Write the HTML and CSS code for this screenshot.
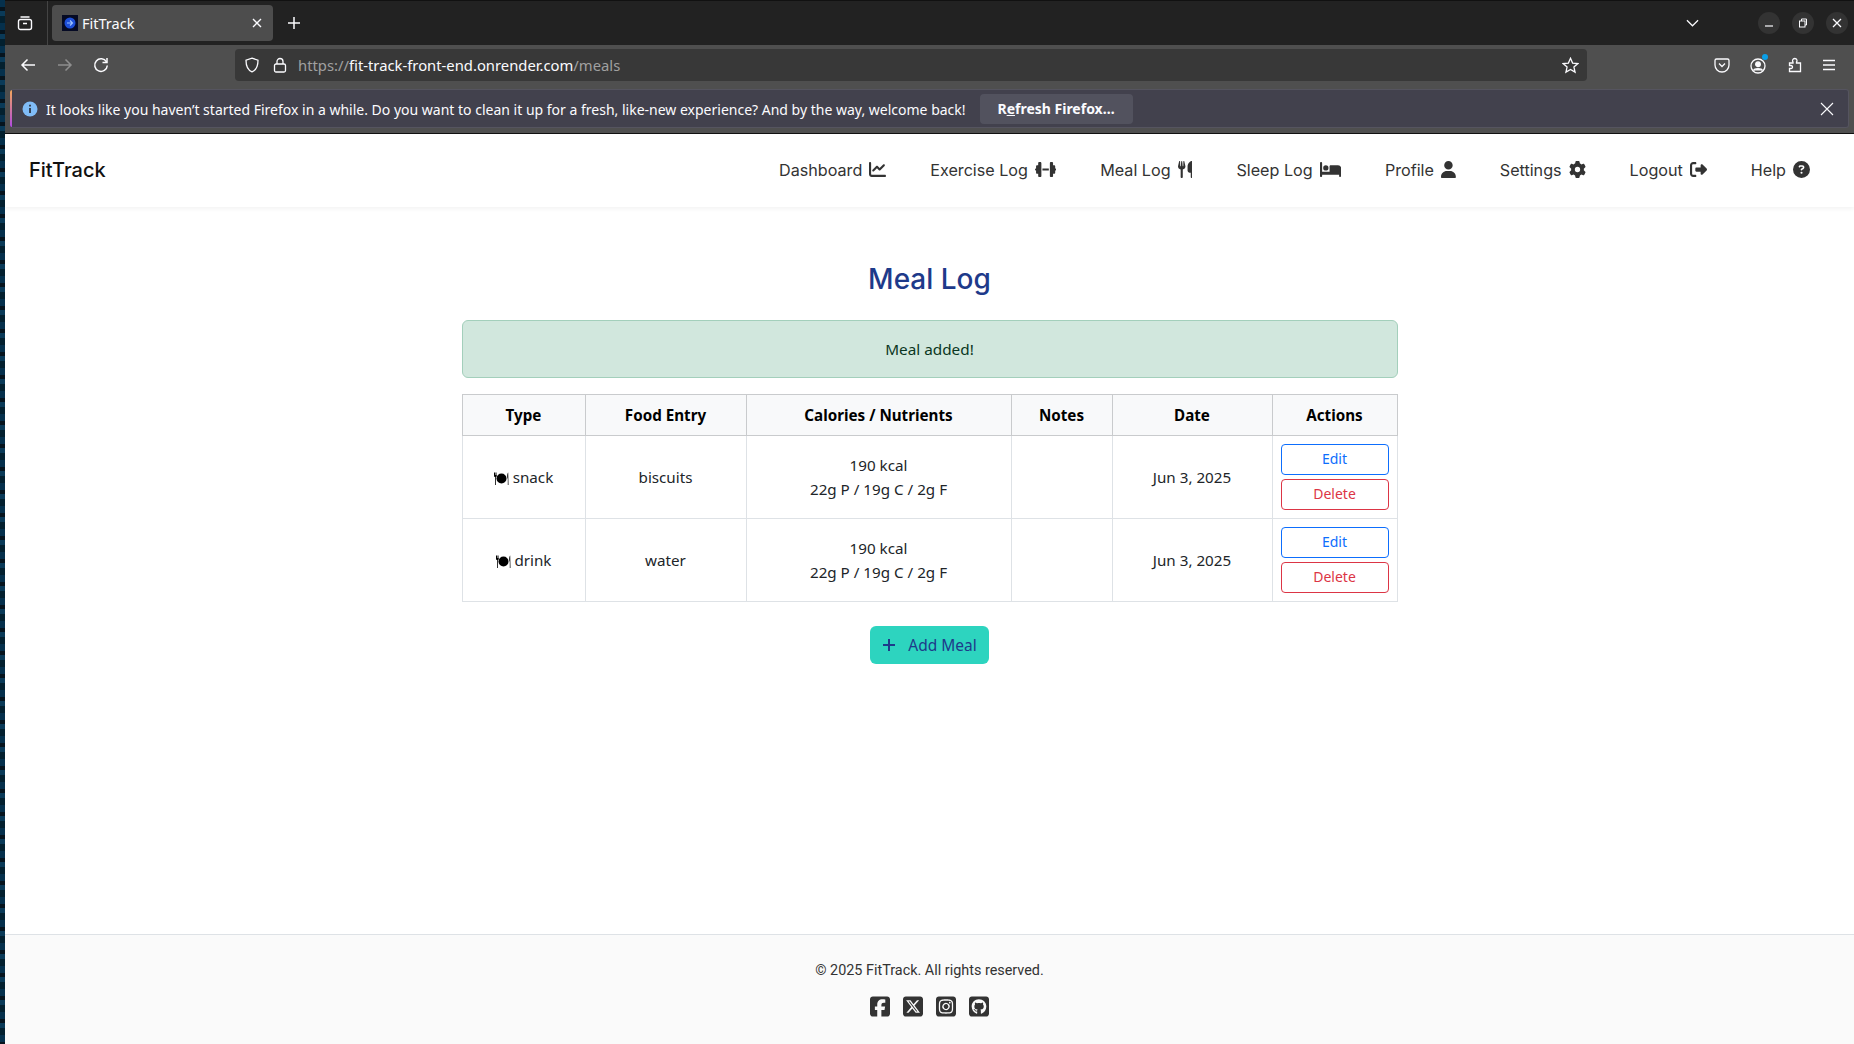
FILE: index.html
```html
<!DOCTYPE html>
<html lang="en">

<head>
    <meta charset="UTF-8">
    <meta name="viewport" content="width=device-width, initial-scale=1.0">
    <title>FitTrack</title>
    <link rel="stylesheet" href="styles.css">
</head>

<body>
    <div class="wallpaper"></div>
    <div class="window">
        <!-- browser tabs -->
        <div class="tabbar">
            <svg class="tabs-icon" viewBox="0 0 16 16" width="16" height="16" fill="none" stroke="#fbfbfe" stroke-width="1.4"><rect x="1.5" y="4.5" width="13" height="10" rx="2"/><path d="M3.5 2h9M6 8.5h4"/></svg>
            <div class="tab-divider"></div>
            <div class="tab">
                <svg class="favicon" viewBox="0 0 16 16" width="16" height="16"><rect width="16" height="16" fill="#050a24"/><circle cx="8" cy="8" r="5.5" fill="#1d4fd8"/><path d="M5 8h5M8 5.5l2.5 2.5L8 10.500" stroke="#9cc0ff" stroke-width="1.200" fill="none"/></svg>
                <span class="tab-title">FitTrack</span>
                <svg class="tab-close" viewBox="0 0 12 12" width="12" height="12" stroke="#fbfbfe" stroke-width="1.400"><path d="M2 2l8 8M10 2l-8 8"/></svg>
            </div>
            <svg class="new-tab" viewBox="0 0 14 14" width="14" height="14" stroke="#fbfbfe" stroke-width="1.500"><path d="M7 1v12M1 7h12"/></svg>
            <svg class="tab-list" viewBox="0 0 14 8" width="13" height="8" fill="none" stroke="#fbfbfe" stroke-width="1.300"><path d="M1 1l6 6 6-6"/></svg>
            <div class="win-btn"><svg viewBox="0 0 10 10" width="10" height="10" stroke="#fbfbfe" stroke-width="1.200"><path d="M1 8h8"/></svg></div>
            <div class="win-btn"><svg viewBox="0 0 10 10" width="10" height="10" fill="none" stroke="#fbfbfe" stroke-width="1"><rect x="1.500" y="3" width="5.500" height="6"/><path d="M3.500 3V1h5v6H7"/></svg></div>
            <div class="win-btn"><svg viewBox="0 0 10 10" width="10" height="10" stroke="#fbfbfe" stroke-width="1.300"><path d="M1 1l8 8M9 1l-8 8"/></svg></div>
        </div>

        <!-- address bar -->
        <div class="toolbar">
            <svg class="tool back" viewBox="0 0 16 16" width="16" height="16" fill="none" stroke="#fbfbfe" stroke-width="1.500"><path d="M15 8H2M7.500 2.500L2 8l5.500 5.500"/></svg>
            <svg class="tool forward" viewBox="0 0 16 16" width="16" height="16" fill="none" stroke="#8f8f8f" stroke-width="1.500"><path d="M1 8h13M8.500 2.500L14 8l-5.500 5.500"/></svg>
            <svg class="tool reload" viewBox="0 0 16 16" width="16" height="16" fill="none" stroke="#fbfbfe" stroke-width="1.500"><path d="M13.500 5A6.300 6.300 0 1 0 14.300 8.500"/><path d="M14 1v4.500H9.500" /></svg>
            <div class="urlbar">
                <svg class="shield" viewBox="0 0 16 16" width="16" height="16" fill="none" stroke="#fbfbfe" stroke-width="1.300"><path d="M8 1.200l6 2c0 6-1.500 9.800-6 11.600C3.500 13 2 9.200 2 3.200z"/></svg>
                <svg class="lock" viewBox="0 0 16 16" width="16" height="16" fill="none" stroke="#fbfbfe" stroke-width="1.300"><rect x="2.500" y="7" width="11" height="8" rx="1.500"/><path d="M5 7V4.500a3 3 0 0 1 6 0V7"/></svg>
                <div class="url"><span class="url-dim">https://</span>fit-track-front-end.onrender.com<span class="url-dim">/meals</span></div>
                <svg class="star" viewBox="0 0 16 16" width="17" height="17" fill="none" stroke="#fbfbfe" stroke-width="1.200"><path d="M8 1.200l2 4.500 4.900.5-3.700 3.200 1.100 4.800L8 11.700l-4.300 2.500 1.100-4.800L1.100 6.200 6 5.700z"/></svg>
            </div>
            <svg class="tool pocket" viewBox="0 0 16 16" width="16" height="16" fill="none" stroke="#fbfbfe" stroke-width="1.300"><path d="M2.500 2h11A1.500 1.500 0 0 1 15 3.500V8A7 7 0 0 1 1 8V3.500A1.500 1.500 0 0 1 2.500 2z"/><path d="M5 6.500l3 3 3-3"/></svg>
            <div class="account">
                <svg viewBox="0 0 16 16" width="16" height="16" fill="none" stroke="#fbfbfe" stroke-width="1.300"><circle cx="8" cy="8" r="7"/><circle cx="8" cy="6.200" r="2.300" fill="#fbfbfe"/><path d="M3.500 12.500c1-2.500 8-2.500 9 0" fill="#fbfbfe"/></svg>
                <span class="account-dot"></span>
            </div>
            <svg class="tool extensions" viewBox="0 0 16 16" width="16" height="16" fill="none" stroke="#fbfbfe" stroke-width="1.300"><path d="M2.500 14.500V11.500h1.500c1 0 1.500-.7 1.500-1.500S5 8.500 4 8.500H2.500V6H6V5c-1-1-.5-3.500 1.800-3.500S10.500 4 9.500 5v1h4v8.500z"/></svg>
            <svg class="tool menu" viewBox="0 0 16 16" width="16" height="16" stroke="#fbfbfe" stroke-width="1.400"><path d="M2 3.500h12M2 8h12M2 12.500h12"/></svg>
        </div>

        <!-- notification bar -->
        <div class="infobar-wrap">
            <div class="infobar">
                <svg class="info-icon" viewBox="0 0 16 16" width="16" height="16"><circle cx="8" cy="8" r="7.500" fill="#80bcf7"/><path d="M8 7v5M8 3.800v1.600" stroke="#1c1b22" stroke-width="1.500"/></svg>
                <span class="info-text">It looks like you haven’t started Firefox in a while. Do you want to clean it up for a fresh, like-new experience? And by the way, welcome back!</span>
                <button class="refresh-btn">R<u>e</u>fresh Firefox…</button>
                <svg class="info-close" viewBox="0 0 14 14" width="14" height="14" stroke="#fbfbfe" stroke-width="1.100"><path d="M1 1l12 12M13 1L1 13"/></svg>
            </div>
        </div>

        <!-- the page itself -->
        <div class="page">
            <nav class="navbar">
                <a class="brand">FitTrack</a>
                <div class="nav-links">
                    <a class="nav-link">Dashboard <svg class="nav-icon" viewBox="0 0 512 512"><path d="M64 64c0-17.7-14.3-32-32-32S0 46.300 0 64V400c0 44.200 35.800 80 80 80H480c17.700 0 32-14.300 32-32s-14.300-32-32-32H80c-8.800 0-16-7.200-16-16V64zm406.600 86.600c12.500-12.500 12.500-32.800 0-45.300s-32.800-12.500-45.300 0L320 210.700l-57.400-57.400c-12.500-12.500-32.800-12.500-45.300 0l-112 112c-12.500 12.500-12.500 32.800 0 45.300s32.800 12.500 45.300 0L240 221.300l57.400 57.400c12.500 12.500 32.800 12.500 45.300 0l128-128z"/></svg></a>
                    <a class="nav-link">Exercise Log <svg class="nav-icon" viewBox="0 0 640 512"><path d="M96 64c0-17.700 14.300-32 32-32h32c17.700 0 32 14.300 32 32V224v64V448c0 17.700-14.300 32-32 32H128c-17.700 0-32-14.300-32-32V384H64c-17.700 0-32-14.300-32-32V288c-17.700 0-32-14.300-32-32s14.300-32 32-32V160c0-17.700 14.300-32 32-32H96V64zm448 0v64h32c17.700 0 32 14.300 32 32v64c17.700 0 32 14.300 32 32s-14.300 32-32 32v64c0 17.700-14.300 32-32 32H544v64c0 17.700-14.300 32-32 32H480c-17.700 0-32-14.300-32-32V288 224 64c0-17.700 14.300-32 32-32h32c17.700 0 32 14.300 32 32zM416 224v64H224V224H416z"/></svg></a>
                    <a class="nav-link">Meal Log <svg class="nav-icon" viewBox="0 0 448 512"><path d="M416 0C400 0 288 32 288 176V288c0 35.300 28.700 64 64 64h32V480c0 17.700 14.300 32 32 32s32-14.300 32-32V352 240 32c0-17.700-14.300-32-32-32zM64 16C64 7.800 57.900 1 49.700 .1S34.200 4.600 32.400 12.500L2.100 148.800C.7 155.100 0 161.500 0 167.900c0 45.900 35.100 83.600 80 87.700V480c0 17.700 14.300 32 32 32s32-14.300 32-32V255.600c44.900-4.100 80-41.800 80-87.700c0-6.400-.7-12.800-2.100-19.100L191.600 12.500c-1.800-8-9.300-13.300-17.400-12.400S160 7.800 160 16V150.200c0 5.400-4.400 9.800-9.800 9.800c-5.100 0-9.300-3.900-9.800-9L127.900 14.600C127.200 6.300 120.300 0 112 0s-15.200 6.300-15.900 14.600L83.700 151c-.5 5.100-4.700 9-9.800 9c-5.400 0-9.800-4.400-9.800-9.800V16z"/></svg></a>
                    <a class="nav-link">Sleep Log <svg class="nav-icon" viewBox="0 0 640 512"><path d="M32 32c17.700 0 32 14.300 32 32V320H288V160c0-17.700 14.300-32 32-32H544c53 0 96 43 96 96V448c0 17.700-14.300 32-32 32s-32-14.300-32-32V416H352 320 64v32c0 17.700-14.300 32-32 32s-32-14.300-32-32V64C0 46.300 14.300 32 32 32zm144 96a80 80 0 1 1 0 160 80 80 0 1 1 0-160z"/></svg></a>
                    <a class="nav-link">Profile <svg class="nav-icon" viewBox="0 0 448 512"><path d="M224 256A128 128 0 1 0 224 0a128 128 0 1 0 0 256zm-45.700 48C79.800 304 0 383.800 0 482.300C0 498.700 13.300 512 29.700 512H418.300c16.400 0 29.700-13.300 29.700-29.700C448 383.800 368.200 304 269.700 304H178.300z"/></svg></a>
                    <a class="nav-link">Settings <svg class="nav-icon" viewBox="0 0 512 512"><path d="M495.900 166.600c3.200 8.700 .5 18.400-6.400 24.600l-43.300 39.400c1.100 8.300 1.700 16.800 1.700 25.400s-.6 17.100-1.700 25.400l43.300 39.400c6.900 6.200 9.600 15.900 6.400 24.600c-4.400 11.900-9.700 23.300-15.800 34.300l-4.700 8.100c-6.600 11-14 21.400-22.100 31.200c-5.900 7.200-15.700 9.600-24.500 6.800l-55.700-17.700c-13.400 10.300-28.200 18.900-44 25.400l-12.500 57.100c-2 9.100-9 16.300-18.200 17.800c-13.800 2.300-28 3.500-42.500 3.500s-28.700-1.200-42.500-3.500c-9.200-1.500-16.200-8.700-18.200-17.800l-12.500-57.100c-15.800-6.500-30.600-15.100-44-25.400L83.100 425.900c-8.800 2.800-18.600 .3-24.500-6.800c-8.100-9.800-15.500-20.200-22.100-31.200l-4.700-8.100c-6.100-11-11.400-22.400-15.800-34.300c-3.200-8.700-.5-18.400 6.400-24.600l43.300-39.400C64.600 273.100 64 264.600 64 256s.6-17.100 1.700-25.400L22.400 191.200c-6.900-6.200-9.600-15.900-6.400-24.600c4.400-11.900 9.700-23.300 15.800-34.300l4.700-8.100c6.600-11 14-21.400 22.100-31.200c5.900-7.200 15.700-9.600 24.500-6.800l55.700 17.700c13.400-10.300 28.200-18.900 44-25.400l12.500-57.100c2-9.100 9-16.300 18.200-17.800C227.300 1.200 241.500 0 256 0s28.700 1.200 42.500 3.500c9.200 1.500 16.200 8.700 18.200 17.800l12.500 57.100c15.800 6.500 30.600 15.100 44 25.400l55.700-17.700c8.800-2.800 18.600-.3 24.500 6.800c8.100 9.800 15.500 20.200 22.100 31.200l4.700 8.100c6.100 11 11.400 22.400 15.800 34.300zM256 336a80 80 0 1 0 0-160 80 80 0 1 0 0 160z"/></svg></a>
                    <a class="nav-link">Logout <svg class="nav-icon" viewBox="0 0 512 512"><path d="M377.900 105.900L500.700 228.700c7.200 7.200 11.300 17.100 11.300 27.300s-4.100 20.100-11.300 27.300L377.900 406.100c-6.400 6.400-15 9.900-24 9.900c-18.700 0-33.900-15.200-33.900-33.900l0-62.100-128 0c-17.700 0-32-14.300-32-32l0-64c0-17.700 14.300-32 32-32l128 0 0-62.100c0-18.700 15.200-33.900 33.900-33.900c9 0 17.600 3.600 24 9.900zM160 96L96 96c-17.700 0-32 14.300-32 32l0 256c0 17.700 14.300 32 32 32l64 0c17.700 0 32 14.300 32 32s-14.300 32-32 32l-64 0c-53 0-96-43-96-96L0 128C0 75 43 32 96 32l64 0c17.700 0 32 14.300 32 32s-14.300 32-32 32z"/></svg></a>
                    <a class="nav-link">Help <svg class="nav-icon" viewBox="0 0 512 512"><path d="M256 512A256 256 0 1 0 256 0a256 256 0 1 0 0 512zM169.800 165.300c7.900-22.300 29.100-37.300 52.800-37.300h58.300c34.900 0 63.100 28.300 63.100 63.100c0 22.600-12.100 43.500-31.700 54.800L280 264.400c-.2 13-10.900 23.600-24 23.600c-13.300 0-24-10.700-24-24V250.500c0-8.600 4.600-16.500 12.100-20.800l44.300-25.400c4.700-2.700 7.600-7.700 7.600-13.100c0-8.400-6.800-15.100-15.100-15.100H222.600c-3.400 0-6.400 2.100-7.500 5.300l-.4 1.200c-4.400 12.500-18.200 19-30.600 14.600s-19-18.200-14.600-30.600l.4-1.200zM224 352a32 32 0 1 1 64 0 32 32 0 1 1 -64 0z"/></svg></a>
                </div>
            </nav>

            <main class="content">
                <h1 class="page-title">Meal Log</h1>
                <div class="alert">Meal added!</div>
                <table class="meal-table">
                    <colgroup>
                        <col class="col-type"><col class="col-food"><col class="col-cal"><col class="col-notes"><col class="col-date"><col class="col-actions">
                    </colgroup>
                    <thead>
                        <tr><th>Type</th><th>Food Entry</th><th>Calories / Nutrients</th><th>Notes</th><th>Date</th><th>Actions</th></tr>
                    </thead>
                    <tbody>
                        <tr>
                            <td class="meal-type"><svg class="plate" viewBox="0 0 15 13" width="15" height="13"><circle cx="7.500" cy="6.500" r="5"/><path d="M0 0.500v3c0 1 .6 1.500 1 1.500v8h.8V5c.4 0 1-.5 1-1.500v-3h-.5v2.500h-.4V.500h-.5v2.500h-.4V.500zM14.200 0.500c-.7.500-1 2-1 4 0 1 .3 2 .6 2.300V13h.7z" /></svg> snack</td>
                            <td>biscuits</td>
                            <td>190 kcal<br>22g P / 19g C / 2g F</td>
                            <td></td>
                            <td>Jun 3, 2025</td>
                            <td class="actions"><button class="btn-edit">Edit</button><button class="btn-delete">Delete</button></td>
                        </tr>
                        <tr>
                            <td class="meal-type"><svg class="plate" viewBox="0 0 15 13" width="15" height="13"><circle cx="7.500" cy="6.500" r="5"/><path d="M0 0.500v3c0 1 .6 1.500 1 1.500v8h.8V5c.4 0 1-.5 1-1.500v-3h-.5v2.500h-.4V.500h-.5v2.500h-.4V.500zM14.200 0.500c-.7.500-1 2-1 4 0 1 .3 2 .6 2.300V13h.7z" /></svg> drink</td>
                            <td>water</td>
                            <td>190 kcal<br>22g P / 19g C / 2g F</td>
                            <td></td>
                            <td>Jun 3, 2025</td>
                            <td class="actions"><button class="btn-edit">Edit</button><button class="btn-delete">Delete</button></td>
                        </tr>
                    </tbody>
                </table>
                <button class="add-btn"><svg class="plus" viewBox="0 0 14 14" width="14" height="14" stroke="#1e3a8a" stroke-width="2"><path d="M7 1v12M1 7h12"/></svg>Add Meal</button>
            </main>

            <footer class="footer">
                <p class="copyright">© 2025 FitTrack. All rights reserved.</p>
                <div class="socials">
                    <svg class="social" viewBox="0 0 448 512"><path d="M64 32C28.700 32 0 60.700 0 96V416c0 35.300 28.700 64 64 64h98.200V334.200H109.400V256h52.800V222.300c0-87.100 39.400-127.500 125-127.500c16.200 0 44.200 3.200 55.700 6.400V172c-6-.6-16.500-1-29.600-1c-42 0-58.200 15.900-58.200 57.200V256h83.600l-14.400 78.200H255V480H384c35.300 0 64-28.700 64-64V96c0-35.300-28.700-64-64-64H64z"/></svg>
                    <svg class="social" viewBox="0 0 448 512"><path d="M64 32C28.700 32 0 60.700 0 96V416c0 35.300 28.700 64 64 64H384c35.300 0 64-28.700 64-64V96c0-35.300-28.700-64-64-64H64zm297.100 84L257.300 234.600 379.400 396H283.800L209 298.100 123.300 396H75.800l111-126.900L69.700 116h98l67.700 89.500L313.600 116h47.500zM323.300 367.600L153.400 142.400H125.100L296.900 367.600h26.300z"/></svg>
                    <svg class="social" viewBox="0 0 448 512"><path d="M194.400 211.700a53.300 53.300 0 1 0 59.300 88.700 53.300 53.300 0 1 0 -59.300-88.700zm142.300-68.400c-5.200-5.200-11.500-9.300-18.400-12c-18.100-7.100-57.600-6.800-83.100-6.500c-4.100 0-7.900 .1-11.200 .1c-3.300 0-7.200 0-11.400-.1c-25.500-.3-64.800-.7-82.900 6.500c-6.900 2.700-13.100 6.800-18.400 12s-9.300 11.500-12 18.400c-7.100 18.100-6.700 57.700-6.500 83.200c0 4.100 .1 7.900 .1 11.100s0 7-.1 11.100c-.2 25.500-.6 65.100 6.500 83.200c2.700 6.900 6.800 13.100 12 18.400s11.500 9.300 18.400 12c18.100 7.100 57.600 6.800 83.100 6.500c4.100 0 7.900-.1 11.200-.1c3.300 0 7.200 0 11.400 .1c25.500 .3 64.800 .7 82.900-6.500c6.900-2.700 13.100-6.800 18.400-12s9.300-11.500 12-18.400c7.200-18 6.800-57.400 6.500-83c0-4.200-.1-8.100-.1-11.400s0-7.100 .1-11.400c.3-25.500 .7-64.900-6.500-83l0 0c-2.700-6.900-6.800-13.100-12-18.400zm-67.100 44.500A82 82 0 1 1 178.400 324.200a82 82 0 1 1 91.100-136.400zm29.200-1.300c-3.100-2.100-5.600-5.100-7.100-8.600s-1.800-7.300-1.100-11.100s2.600-7.100 5.200-9.800s6.100-4.500 9.800-5.200s7.600-.4 11.100 1.100s6.500 3.900 8.600 7s3.200 6.800 3.200 10.600c0 2.500-.5 5-1.400 7.300s-2.400 4.400-4.100 6.200s-3.900 3.200-6.200 4.200s-4.800 1.500-7.300 1.500l0 0c-3.800 0-7.500-1.100-10.600-3.200zM448 96c0-35.300-28.700-64-64-64H64C28.700 32 0 60.700 0 96V416c0 35.300 28.700 64 64 64H384c35.300 0 64-28.700 64-64V96zM357 389c-18.700 18.700-41.400 24.600-67 25.900c-26.400 1.500-105.600 1.500-132 0c-25.600-1.300-48.300-7.200-67-25.900s-24.600-41.400-25.800-67c-1.500-26.400-1.500-105.600 0-132c1.300-25.600 7.100-48.300 25.800-67s41.500-24.600 67-25.800c26.400-1.500 105.600-1.500 132 0c25.600 1.300 48.300 7.100 67 25.800s24.600 41.400 25.800 67c1.500 26.300 1.500 105.400 0 131.900c-1.300 25.600-7.100 48.300-25.800 67z"/></svg>
                    <svg class="social" viewBox="0 0 448 512"><path d="M448 96c0-35.300-28.700-64-64-64H64C28.700 32 0 60.700 0 96V416c0 35.300 28.700 64 64 64H384c35.300 0 64-28.700 64-64V96zM265.800 407.700c0-1.800 0-6 .1-11.600c.1-11.400 .1-28.800 .1-43.700c0-15.600-5.200-25.500-11.300-30.700c37-4.100 76-9.200 76-73.100c0-18.200-6.500-27.300-17.100-39c1.700-4.300 7.400-22-1.700-45c-13.900-4.300-45.700 17.900-45.700 17.900c-13.200-3.700-27.500-5.600-41.600-5.600s-28.400 1.900-41.600 5.600c0 0-31.800-22.200-45.700-17.900c-9.100 22.900-3.500 40.600-1.700 45c-10.600 11.700-15.600 20.800-15.600 39c0 63.600 37.300 69 74.300 73.100c-4.800 4.300-9.100 11.700-10.600 22.300c-9.500 4.300-33.800 11.700-48.300-13.900c-9.100-15.800-25.500-17.100-25.500-17.100c-16.200-.2-1.100 10.200-1.100 10.200c10.800 5 18.400 24.200 18.400 24.200c9.700 29.700 56.100 19.700 56.100 19.700c0 9 .1 21.700 .1 30.600c0 4.800 .1 8.600 .1 10c0 4.300-3 9.500-11.500 8C106 393.600 59.800 330.800 59.800 257.400c0-91.800 70.200-161.500 162-161.500s166.200 69.700 166.200 161.500c.1 73.400-44.700 136.300-110.700 158.300c-8.400 1.500-11.500-3.700-11.500-8z"/></svg>
                </div>
            </footer>
        </div>
    </div>
</body>

</html>
```

FILE: styles.css
```css
* {
    box-sizing: border-box;
}

body {
    margin: 0;
    height: 100vh;
    display: flex;
    overflow: hidden;
    background-color: #fff;
    font-family: "Noto Sans", sans-serif;
}

/* desktop showing at the left of the window */
.wallpaper {
    width: 5px;
    background: repeating-linear-gradient(180deg, #05304c 0, #05304c 7px, #06141e 7px, #06141e 11px, #0a3a58 11px, #0a3a58 16px, #03202f 16px, #03202f 23px);
}

.window {
    flex: 1;
    min-width: 0;
    display: flex;
    flex-direction: column;
}

/* browser chrome */
.tabbar {
    height: 45px;
    padding-right: 6px;
    display: flex;
    align-items: center;
    background-color: #222222;
    border-top: 1px solid #111;
}

.tabs-icon {
    margin-left: 12px;
}

.tab-divider {
    width: 1px;
    height: 44px;
    margin-left: 14px;
    background-color: #444;
}

.tab {
    width: 221px;
    height: 36px;
    margin-left: 4px;
    padding: 0 10px;
    display: flex;
    align-items: center;
    background-color: #4d4d4d;
    border-radius: 4px;
}

.tab-title {
    flex: 1;
    margin-left: 4px;
    color: #fbfbfe;
    font-size: 14.500px;
}

.new-tab {
    margin-left: 14px;
}

.tab-list {
    margin-left: auto;
    margin-right: 47px;
}

.win-btn {
    width: 22px;
    height: 22px;
    margin-left: 12px;
    display: flex;
    justify-content: center;
    align-items: center;
    border-radius: 50%;
    background-color: #333;
}

.toolbar {
    height: 44px;
    padding-bottom: 4px;
    display: flex;
    align-items: center;
    background-color: #4f4f4f;
}

.tool {
    flex: none;
}

.back {
    margin-left: 15px;
}

.forward {
    margin-left: 21px;
}

.reload {
    margin-left: 20px;
}

.urlbar {
    width: 1352px;
    height: 32px;
    margin-left: 126px;
    padding: 0 8px 0 9px;
    display: flex;
    align-items: center;
    background-color: #383838;
    border-radius: 4px;
}

.lock {
    margin-left: 12px;
}

.url {
    flex: 1;
    margin-left: 10px;
    color: #fbfbfe;
    font-size: 14.800px;
}

.url-dim {
    color: #a0a0a0;
}

.pocket {
    margin-left: 127px;
}

.account {
    position: relative;
    height: 16px;
    margin-left: 20px;
}

.account-dot {
    position: absolute;
    top: -3px;
    right: -2px;
    width: 6px;
    height: 6px;
    border-radius: 50%;
    background-color: #0a9fe8;
}

.extensions {
    margin-left: 21px;
}

.menu {
    margin-left: 18px;
}

.infobar-wrap {
    height: 45px;
    padding: 0 5px 5px 5px;
    background-color: #4f4f4f;
    border-bottom: 1px solid #111;
}

.infobar {
    height: 39px;
    display: flex;
    align-items: center;
    padding-left: 11px;
    background: linear-gradient(180deg, #f2a65a, #b04ae0) left top / 2px 100% no-repeat, #42414d;
    border: 1px solid #55545f;
    border-left: none;
    border-radius: 3px;
}

.info-icon {
    flex: none;
    margin-left: 1px;
}

.info-text {
    margin-top: 2px;
    margin-left: 8px;
    color: #fbfbfe;
    font-size: 14px;
    white-space: nowrap;
}

.refresh-btn {
    height: 30px;
    width: 153px;
    margin-left: 14px;
    color: #fbfbfe;
    font-family: "Noto Sans", sans-serif;
    font-size: 14px;
    font-weight: 700;
    background-color: #52525e;
    border: none;
    border-radius: 4px;
}

.info-close {
    margin-left: auto;
    margin-right: 14px;
}

/* page */
.page {
    flex: 1;
    min-height: 0;
    display: flex;
    flex-direction: column;
    background-color: #fff;
}

.navbar {
    height: 73px;
    padding: 0 44px 2px 24px;
    display: flex;
    justify-content: space-between;
    align-items: center;
    background-color: #fff;
    box-shadow: 0 2px 4px rgba(0, 0, 0, 0.05);
}

.brand {
    color: #111;
    font-family: Inter, sans-serif;
    font-size: 20px;
    font-weight: 500;
}

.nav-links {
    display: flex;
    gap: 44px;
}

.nav-link {
    display: flex;
    align-items: center;
    gap: 7px;
    color: #333;
    font-family: Inter, sans-serif;
    font-size: 16.150px;
}

.nav-icon {
    height: 17px;
    width: auto;
    fill: #333;
}

.content {
    flex: 1;
    width: 936px;
    margin: 0 auto;
    padding-top: 52px;
    display: flex;
    flex-direction: column;
    align-items: center;
}

.page-title {
    margin: 0 0 21px 0;
    color: #1e3a8a;
    font-family: Inter, sans-serif;
    font-size: 28px;
    font-weight: 500;
    line-height: 40px;
}

.alert {
    width: 100%;
    height: 58px;
    margin-bottom: 16px;
    padding-bottom: 1px;
    display: flex;
    justify-content: center;
    align-items: center;
    color: #0a3622;
    font-size: 15.300px;
    background-color: #d1e7dd;
    border: 1px solid #a3cfbb;
    border-radius: 6px;
}

.meal-table {
    width: 935px;
    align-self: flex-end;
    table-layout: fixed;
    border-collapse: collapse;
    color: #212529;
    font-size: 15.200px;
    line-height: 24px;
    text-align: center;
}

.col-type { width: 123px; }
.col-food { width: 161px; }
.col-cal { width: 265px; }
.col-notes { width: 101px; }
.col-date { width: 160px; }
.col-actions { width: 125px; }

.meal-table th {
    height: 41px;
    padding: 0 0 1px 0;
    color: #000;
    font-weight: 700;
    background-color: #f8f9fa;
    border: 1px solid #c9cbcd;
}

.meal-table td {
    height: 83px;
    padding: 0 0 1px 0;
    border: 1px solid #dee2e6;
}

.plate {
    vertical-align: -2px;
    fill: #000;
}

.actions button {
    display: block;
    width: 108px;
    height: 31px;
    margin: 0 auto;
    padding: 0 0 2px 0;
    font-family: "Noto Sans", sans-serif;
    font-size: 14px;
    background-color: #fff;
    border-radius: 4px;
}

.actions .btn-delete {
    margin-top: 4px;
}

.btn-edit {
    color: #0d6efd;
    border: 1px solid #0d6efd;
}

.btn-delete {
    color: #dc3545;
    border: 1px solid #dc3545;
}

.add-btn {
    width: 119px;
    height: 38px;
    margin-top: 24px;
    padding: 0 0 1px 0;
    display: flex;
    justify-content: center;
    align-items: center;
    gap: 12px;
    color: #1e3a8a;
    font-family: "Noto Sans", sans-serif;
    font-size: 15.500px;
    background-color: #2dd4bf;
    border: none;
    border-radius: 6px;
}

.footer {
    height: 110px;
    padding-top: 27px;
    display: flex;
    flex-direction: column;
    align-items: center;
    background-color: #fafafa;
    border-top: 1px solid #dee2e6;
}

.copyright {
    margin: 0;
    color: #333;
    font-family: Roboto, sans-serif;
    font-size: 14.400px;
}

.socials {
    margin-top: 16px;
    display: flex;
    gap: 13px;
}

.social {
    width: 20px;
    height: 23px;
    fill: #333;
}
```
